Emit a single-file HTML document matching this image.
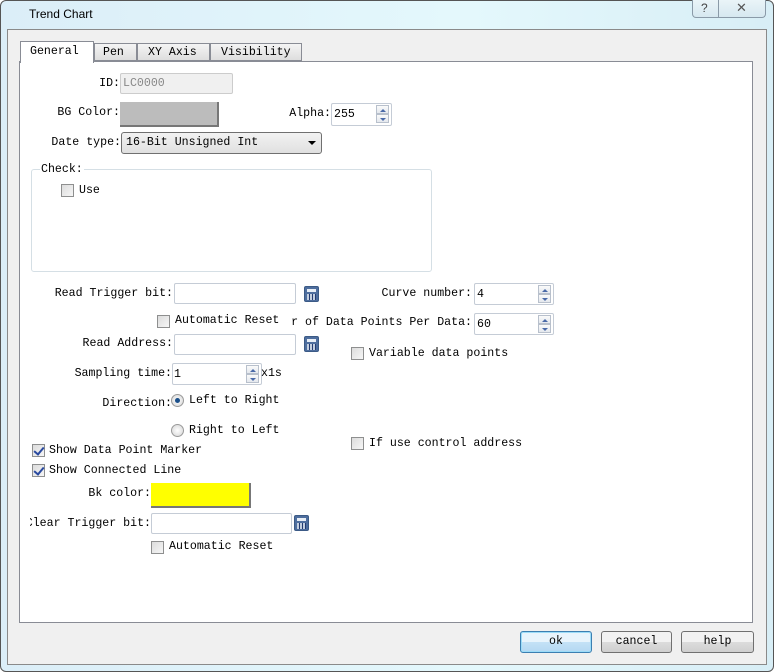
<!DOCTYPE html>
<html><head><meta charset="utf-8"><style>
*{box-sizing:border-box;margin:0;padding:0}
body{width:774px;height:672px;overflow:hidden;background:#fff;font-family:"Liberation Mono","Noto Sans CJK SC",monospace;font-size:11.6px;color:#000;position:relative}
.a{position:absolute;white-space:nowrap;line-height:14px}
.r{text-align:right}
.in{position:absolute;background:#fff;border:1px solid #c5ccd6;border-radius:2px}
.cb{position:absolute;width:13px;height:13px;border:1px solid #8e8f8f;background:linear-gradient(135deg,#dcdcdc,#f6f6f6)}
.cb.k::after{content:"";position:absolute;left:3px;top:0px;width:4px;height:8px;border:solid #2a4aa0;border-width:0 2px 2px 0;transform:rotate(40deg)}
.sp{position:absolute;width:13px;border:1px solid #b8c0cc;background:linear-gradient(#fafafa,#e4e8ee)}
.sp::after{content:"";position:absolute;left:3px;border-left:3px solid transparent;border-right:3px solid transparent}
.up::after{top:3px;border-bottom:3px solid #4a6aa8}
.dn::after{top:3px;border-top:3px solid #4a6aa8}
.calc{position:absolute;width:15px;height:16px;border:1px solid #3b5a86;border-radius:2px;background:#4e6e9e}
.calc::before{content:"";position:absolute;left:2px;top:2px;width:9px;height:3px;background:#e8eef6}
.calc::after{content:"";position:absolute;left:2px;top:7px;width:9px;height:6px;background:repeating-linear-gradient(90deg,#dfe6f0 0 2px,#1a2f66 2px 3px),#fff;opacity:.8}
.rd{position:absolute;width:13px;height:13px;border-radius:50%;border:1px solid #9a9a9a;background:radial-gradient(#fff,#d4d4d4)}
.btn{position:absolute;height:22px;border:1px solid #707070;border-radius:3px;background:linear-gradient(#f2f2f2 50%,#dcdcdc 50%,#cfcfcf);text-align:center;line-height:20px}
</style></head><body>
<div style="position:absolute;left:0;top:0;width:774px;height:672px;border:1px solid #555;border-radius:6px;background:linear-gradient(90deg,#dbeef8,#e4f8fc 60%,#d8eef6)"></div>
<div class="a" style="left:29px;top:7px;font-family:'Liberation Sans',sans-serif;font-size:12px">Trend Chart</div>
<div style="position:absolute;left:692px;top:0;width:74px;height:18px;border:1px solid #8a9aa8;border-top:none;border-radius:0 0 4px 4px;background:linear-gradient(#eaf4f8,#d6e8f0)"></div>
<div style="position:absolute;left:718px;top:0;width:1px;height:18px;background:#8a9aa8"></div>
<div class="a" style="left:701px;top:1px;font-family:'Liberation Sans',sans-serif;font-size:12px;color:#444">?</div>
<div class="a" style="left:736px;top:1px;font-family:'Liberation Sans',sans-serif;font-size:13px;color:#555">✕</div>
<div style="position:absolute;left:7px;top:29px;width:760px;height:636px;border:1px solid #8a8a8a;background:#f0f0f0"></div>
<div style="position:absolute;left:19px;top:61px;width:734px;height:562px;border:1px solid #898c95;background:#fff"></div>
<div style="position:absolute;left:20px;top:41px;width:74px;height:22px;border:1px solid #898c95;border-bottom:none;background:#fff"></div>
<div class="a" style="left:30px;top:45px">General</div>
<div style="position:absolute;left:94px;top:43px;width:43px;height:18px;border:1px solid #898c95;background:linear-gradient(#f4f4f4,#dedede)"></div>
<div class="a" style="left:103px;top:46px">Pen</div>
<div style="position:absolute;left:137px;top:43px;width:73px;height:18px;border:1px solid #898c95;background:linear-gradient(#f4f4f4,#dedede)"></div>
<div class="a" style="left:148px;top:46px">XY Axis</div>
<div style="position:absolute;left:210px;top:43px;width:92px;height:18px;border:1px solid #898c95;background:linear-gradient(#f4f4f4,#dedede)"></div>
<div class="a" style="left:221px;top:46px">Visibility</div>

<div class="a r" style="left:0;width:120px;top:77px">ID:</div>
<div class="in" style="left:120px;top:73px;width:113px;height:21px;background:#f0f0f0;border-color:#ccc"></div>
<div class="a" style="left:123px;top:77px;color:#888">LC0000</div>

<div class="a r" style="left:0;width:120px;top:106px">BG Color:</div>
<div style="position:absolute;left:120px;top:102px;width:99px;height:25px;background:#bcbcbc;border-right:2px solid #777;border-bottom:2px solid #777"></div>
<div class="a r" style="left:0;width:331px;top:107px">Alpha:</div>
<div class="in" style="left:331px;top:103px;width:61px;height:23px"></div>
<div class="a" style="left:334px;top:108px">255</div>
<div class="sp up" style="left:376px;top:105px;height:9px"></div>
<div class="sp dn" style="left:376px;top:114px;height:9px"></div>

<div class="a r" style="left:0;width:121px;top:136px">Date type:</div>
<div style="position:absolute;left:121px;top:132px;width:201px;height:22px;border:1px solid #707070;border-radius:3px;background:linear-gradient(#f2f2f2,#e0e0e0)"></div>
<div class="a" style="left:126px;top:136px">16-Bit Unsigned Int</div>
<div style="position:absolute;left:308px;top:141px;border-left:4px solid transparent;border-right:4px solid transparent;border-top:4px solid #000"></div>

<div style="position:absolute;left:31px;top:169px;width:401px;height:103px;border:1px solid #d5dfe5;border-radius:3px"></div>
<div class="a" style="left:40px;top:163px;background:#fff;padding:0 1px">Check:</div>
<div class="cb" style="left:61px;top:184px"></div>
<div class="a" style="left:79px;top:184px">Use</div>

<div class="a r" style="left:0;width:173px;top:287px">Read Trigger bit:</div>
<div class="in" style="left:174px;top:283px;width:122px;height:21px"></div>
<div class="calc" style="left:304px;top:286px"></div>
<div class="a r" style="left:0;width:472px;top:287px">Curve number:</div>
<div class="in" style="left:474px;top:283px;width:80px;height:22px"></div>
<div class="a" style="left:477px;top:288px">4</div>
<div class="sp up" style="left:538px;top:285px;height:9px"></div>
<div class="sp dn" style="left:538px;top:294px;height:9px"></div>

<div class="cb" style="left:157px;top:315px"></div>
<div class="a" style="left:175px;top:314px">Automatic Reset</div>
<div class="a r" style="left:0;width:472px;top:316px">r of Data Points Per Data:</div>
<div class="in" style="left:474px;top:313px;width:80px;height:22px"></div>
<div class="a" style="left:477px;top:318px">60</div>
<div class="sp up" style="left:538px;top:315px;height:9px"></div>
<div class="sp dn" style="left:538px;top:324px;height:9px"></div>

<div class="a r" style="left:0;width:173px;top:337px">Read Address:</div>
<div class="in" style="left:174px;top:334px;width:122px;height:21px"></div>
<div class="calc" style="left:304px;top:336px"></div>
<div class="cb" style="left:351px;top:347px"></div>
<div class="a" style="left:369px;top:347px">Variable data points</div>

<div class="a r" style="left:0;width:172px;top:367px">Sampling time:</div>
<div class="in" style="left:172px;top:363px;width:90px;height:22px"></div>
<div class="a" style="left:174px;top:368px">1</div>
<div class="sp up" style="left:246px;top:365px;height:9px"></div>
<div class="sp dn" style="left:246px;top:374px;height:9px"></div>
<div class="a" style="left:261px;top:367px">x1s</div>

<div class="a r" style="left:0;width:172px;top:397px">Direction:</div>
<div class="rd" style="left:171px;top:394px"><div style="position:absolute;left:3px;top:3px;width:5px;height:5px;border-radius:50%;background:#1a4f8a"></div></div>
<div class="a" style="left:189px;top:394px">Left to Right</div>
<div class="rd" style="left:171px;top:424px"></div>
<div class="a" style="left:189px;top:424px">Right to Left</div>
<div class="cb" style="left:351px;top:437px"></div>
<div class="a" style="left:369px;top:437px">If use control address</div>

<div class="cb k" style="left:32px;top:444px"></div>
<div class="a" style="left:49px;top:444px">Show Data Point Marker</div>
<div class="cb k" style="left:32px;top:464px"></div>
<div class="a" style="left:49px;top:464px">Show Connected Line</div>

<div class="a r" style="left:0;width:151px;top:487px">Bk color:</div>
<div style="position:absolute;left:151px;top:483px;width:100px;height:25px;background:#ffff00;border-right:2px solid #777;border-bottom:2px solid #777"></div>

<div style="position:absolute;left:30px;top:517px;width:121px;height:14px;overflow:hidden"><div class="a" style="right:0;top:0">Clear Trigger bit:</div></div>
<div class="in" style="left:151px;top:513px;width:141px;height:21px"></div>
<div class="calc" style="left:294px;top:515px"></div>
<div class="cb" style="left:151px;top:541px"></div>
<div class="a" style="left:169px;top:540px">Automatic Reset</div>

<div class="btn" style="left:520px;top:631px;width:72px;border-color:#3c7fb1;background:linear-gradient(#e8f4fc 50%,#c4e2f6 50%,#b4d8f2);box-shadow:inset 0 0 0 1px #9cdcf8">ok</div>
<div class="btn" style="left:601px;top:631px;width:71px">cancel</div>
<div class="btn" style="left:681px;top:631px;width:73px">help</div>
</body></html>
